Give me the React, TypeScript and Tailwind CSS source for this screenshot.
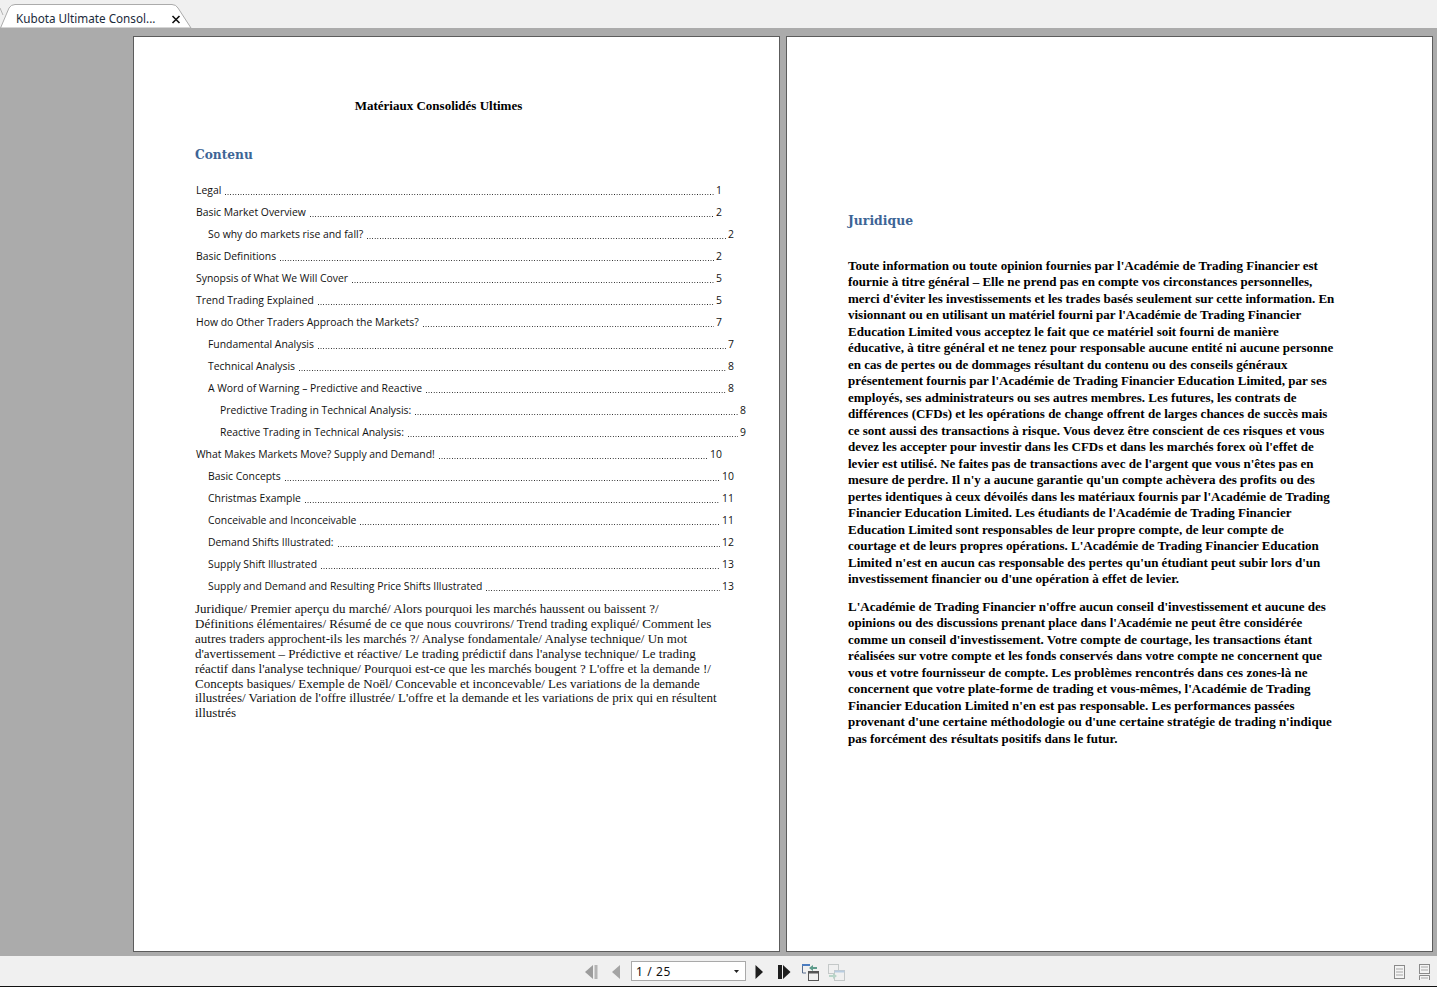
const tocRows: [string, string, number][] = [
  ['Legal', '1', 0],
  ['Basic Market Overview', '2', 0],
  ['So why do markets rise and fall?', '2', 1],
  ['Basic Definitions', '2', 0],
  ['Synopsis of What We Will Cover', '5', 0],
  ['Trend Trading Explained', '5', 0],
  ['How do Other Traders Approach the Markets?', '7', 0],
  ['Fundamental Analysis', '7', 1],
  ['Technical Analysis', '8', 1],
  ['A Word of Warning – Predictive and Reactive', '8', 1],
  ['Predictive Trading in Technical Analysis:', '8', 2],
  ['Reactive Trading in Technical Analysis:', '9', 2],
  ['What Makes Markets Move? Supply and Demand!', '10', 0],
  ['Basic Concepts', '10', 1],
  ['Christmas Example', '11', 1],
  ['Conceivable and Inconceivable', '11', 1],
  ['Demand Shifts Illustrated:', '12', 1],
  ['Supply Shift Illustrated', '13', 1],
  ['Supply and Demand and Resulting Price Shifts Illustrated', '13', 1],
]

const summaryLines = [
  'Juridique/ Premier aperçu du marché/ Alors pourquoi les marchés haussent ou baissent ?/',
  'Définitions élémentaires/ Résumé de ce que nous couvrirons/ Trend trading expliqué/ Comment les',
  'autres traders approchent-ils les marchés ?/ Analyse fondamentale/ Analyse technique/ Un mot',
  "d'avertissement – Prédictive et réactive/ Le trading prédictif dans l'analyse technique/ Le trading",
  "réactif dans l'analyse technique/ Pourquoi est-ce que les marchés bougent ? L'offre et la demande !/",
  'Concepts basiques/ Exemple de Noël/ Concevable et inconcevable/ Les variations de la demande',
  "illustrées/ Variation de l'offre illustrée/ L'offre et la demande et les variations de prix qui en résultent",
  'illustrés',
]

const legalOne = [
  "Toute information ou toute opinion fournies par l'Académie de Trading Financier est",
  'fournie à titre général – Elle ne prend pas en compte vos circonstances personnelles,',
  "merci d'éviter les investissements et les trades basés seulement sur cette information. En",
  "visionnant ou en utilisant un matériel fourni par l'Académie de Trading Financier",
  'Education Limited vous acceptez le fait que ce matériel soit fourni de manière',
  'éducative, à titre général et ne tenez pour responsable aucune entité ni aucune personne',
  'en cas de pertes ou de dommages résultant du contenu ou des conseils généraux',
  "présentement fournis par l'Académie de Trading Financier Education Limited, par ses",
  'employés, ses administrateurs ou ses autres membres. Les futures, les contrats de',
  'différences (CFDs) et les opérations de change offrent de larges chances de succès mais',
  'ce sont aussi des transactions à risque. Vous devez être conscient de ces risques et vous',
  "devez les accepter pour investir dans les CFDs et dans les marchés forex où l'effet de",
  "levier est utilisé. Ne faites pas de transactions avec de l'argent que vous n'êtes pas en",
  "mesure de perdre. Il n'y a aucune garantie qu'un compte achèvera des profits ou des",
  "pertes identiques à ceux dévoilés dans les matériaux fournis par l'Académie de Trading",
  "Financier Education Limited. Les étudiants de l'Académie de Trading Financier",
  'Education Limited sont responsables de leur propre compte, de leur compte de',
  "courtage et de leurs propres opérations. L'Académie de Trading Financier Education",
  "Limited n'est en aucun cas responsable des pertes qu'un étudiant peut subir lors d'un",
  "investissement financier ou d'une opération à effet de levier.",
]

const legalTwo = [
  "L'Académie de Trading Financier n'offre aucun conseil d'investissement et aucune des",
  "opinions ou des discussions prenant place dans l'Académie ne peut être considérée",
  "comme un conseil d'investissement. Votre compte de courtage, les transactions étant",
  'réalisées sur votre compte et les fonds conservés dans votre compte ne concernent que',
  'vous et votre fournisseur de compte. Les problèmes rencontrés dans ces zones-là ne',
  "concernent que votre plate-forme de trading et vous-mêmes, l'Académie de Trading",
  "Financier Education Limited n'en est pas responsable. Les performances passées",
  "provenant d'une certaine méthodologie ou d'une certaine stratégie de trading n'indique",
  'pas forcément des résultats positifs dans le futur.',
]

const TocRow = ({ label, page, level }: { label: string; page: string; level: number }) => (
  <div
    className={`flex h-[22px] w-[526px] items-center text-[10.4px] text-[#111] ${
      level === 0 ? 'ml-[2px]' : level === 1 ? 'ml-[14px]' : 'ml-[26px]'
    }`}
  >
    <span className="whitespace-nowrap">{label}</span>
    {/* dot leader */}
    <span className="ml-[4px] mt-[7px] h-[1px] min-w-0 flex-1 bg-[linear-gradient(to_right,#222_1px,transparent_1px)] bg-[length:2.6px_1px]" />
    <span className="ml-[2px]">{page}</span>
  </div>
)

const Lines = ({ lines, className }: { lines: string[]; className: string }) => (
  <div className={className}>
    {lines.map((line) => (
      <div key={line} className="whitespace-nowrap">
        {line}
      </div>
    ))}
  </div>
)

const App = () => {
  return (
    <div className="flex h-[987px] w-[1437px] flex-col overflow-hidden bg-[#ababab] font-['Liberation_Serif',serif]">
      {/* Tab strip */}
      <div className="relative flex h-[28px] shrink-0 bg-[#f0f0f0]">
        <svg className="absolute left-0 top-0" width="195" height="28" viewBox="0 0 195 28">
          <path d="M0 8 L3 15" stroke="#b4b4b4" fill="none" />
          <path
            d="M0.5 28 L9 8 Q11 4.5 15 4.5 L172 4.5 Q176 4.5 178 8 L191 28 Z"
            fill="#fff"
            stroke="#ababab"
          />
        </svg>
        <span className="relative ml-[16px] mt-[10px] h-[16px] font-['Noto_Sans',sans-serif] text-[11.7px] leading-[17px] text-[#1a2a3a]">
          Kubota Ultimate Consol...
        </span>
        <svg className="absolute left-[171px] top-[15px]" width="10" height="9" viewBox="0 0 10 9">
          <path d="M1.5 1 L8.5 8 M8.5 1 L1.5 8" stroke="#111" strokeWidth="1.6" />
        </svg>
      </div>

      {/* Pages */}
      <div className="flex h-[928px] shrink-0 gap-[6px] pl-[133px] pt-[8px]">
        <div className="h-[916px] w-[647px] border border-[#5c5c5c] bg-white pl-[60px]">
          <div className="mt-[61px] w-[488px] pl-[1px] text-center text-[13px] font-bold leading-[16px] text-black">
            Matériaux Consolidés Ultimes
          </div>
          <div className="ml-[1px] mt-[32px] font-['DejaVu_Serif',serif] text-[12.2px] font-bold leading-[18px] text-[#3d6596]">
            Contenu
          </div>
          <div className="mt-[16px] font-['Open_Sans',sans-serif]">
            {tocRows.map(([label, page, level]) => (
              <TocRow key={label} label={label} page={page} level={level} />
            ))}
          </div>
          <Lines lines={summaryLines} className="ml-[1px] mt-[4px] text-[13px] leading-[14.9px] text-[#111]" />
        </div>

        <div className="h-[916px] w-[647px] border border-[#5c5c5c] bg-white pl-[61px]">
          <div className="mt-[175px] font-['DejaVu_Serif',serif] text-[12.4px] font-bold leading-[18px] text-[#3d6596]">
            Juridique
          </div>
          <Lines lines={legalOne} className="mt-[27.5px] text-[13px] font-bold leading-[16.5px] text-black" />
          <Lines lines={legalTwo} className="mt-[11px] text-[13px] font-bold leading-[16.5px] text-black" />
        </div>
      </div>

      {/* Bottom toolbar */}
      <div className="flex h-[31px] shrink-0 items-center border-b border-[#111] bg-[#f0f0f0] pl-[585px] pr-[7px]">
        <svg className="mt-[1px]" width="13" height="14" viewBox="0 0 13 14">
          <path d="M8 0 V14 L0 7 Z" fill="#9c9c9c" />
          <rect x="9.5" y="0" width="3" height="14" fill="#b4b4b4" />
        </svg>
        <svg className="ml-[14px] mt-[1px]" width="9" height="14" viewBox="0 0 9 14">
          <path d="M8 0 V14 L0 7 Z" fill="#a4a4a4" />
        </svg>
        <div className="ml-[10px] flex h-[20px] w-[115px] items-center justify-between border border-[#a9a9a9] bg-white pl-[4px] pr-[6px] font-['Noto_Sans',sans-serif] text-[12px] tracking-[0.6px] text-[#111]">
          <span className="mt-[1px]">1 / 25</span>
          <svg width="5" height="3" viewBox="0 0 5 3">
            <path d="M0 0 H5 L2.5 3 Z" fill="#222" />
          </svg>
        </div>
        <svg className="ml-[9px] mt-[1px]" width="9" height="14" viewBox="0 0 9 14">
          <path d="M0.5 0 V14 L8 7 Z" fill="#1e1e1e" />
        </svg>
        <svg className="ml-[14px] mt-[1px]" width="13" height="14" viewBox="0 0 13 14">
          <rect x="0" y="0" width="4" height="14" fill="#1e1e1e" />
          <path d="M5 0 V14 L12.5 7 Z" fill="#1e1e1e" />
        </svg>
        <svg className="ml-[11px] mt-[2px]" width="18" height="17" viewBox="0 0 18 17">
          <path d="M0.5 1 V9 H4" stroke="#5a6f8f" fill="none" />
          <rect x="0" y="0" width="8" height="2" fill="#4a7cc0" />
          <path d="M7 4 L11 1 V3 H15 V5 H11 V7 Z" fill="#5f9c8c" />
          <rect x="6.5" y="7.5" width="10" height="9" fill="#f0f0f0" stroke="#555" />
          <rect x="6.5" y="7.5" width="10" height="2" fill="#555" />
        </svg>
        <svg className="ml-[8px] mt-[2px]" width="18" height="17" viewBox="0 0 18 17">
          <rect x="0.5" y="0.5" width="10" height="9" fill="none" stroke="#c4c8c8" />
          <rect x="6.5" y="6.5" width="10" height="10" fill="#f0f0f0" stroke="#c4c8c8" />
          <rect x="6.5" y="6.5" width="10" height="2" fill="#b8cce0" />
          <path d="M1 11 H5 V9 L9 12 L5 15 V13 H1 Z" fill="#b8d4c8" />
        </svg>

        <div className="ml-auto mt-[2px] flex items-center gap-[14px]">
          <svg width="11" height="14" viewBox="0 0 11 14">
            <rect x="0.5" y="0.5" width="10" height="13" fill="#f4f4f4" stroke="#8a8a8a" />
            <path d="M2 4 H9 M2 7 H9 M2 10 H9" stroke="#a8a8a8" />
          </svg>
          <svg width="11" height="16" viewBox="0 0 11 16">
            <rect x="0.5" y="0.5" width="10" height="9" fill="#f4f4f4" stroke="#8a8a8a" />
            <path d="M2 3 H9 M2 6 H9" stroke="#a8a8a8" />
            <path d="M0.5 16 V11.5 H10.5 V16" fill="#f4f4f4" stroke="#8a8a8a" />
            <path d="M2 14 H9" stroke="#a8a8a8" />
          </svg>
        </div>
      </div>
    </div>
  )
}

export default App
